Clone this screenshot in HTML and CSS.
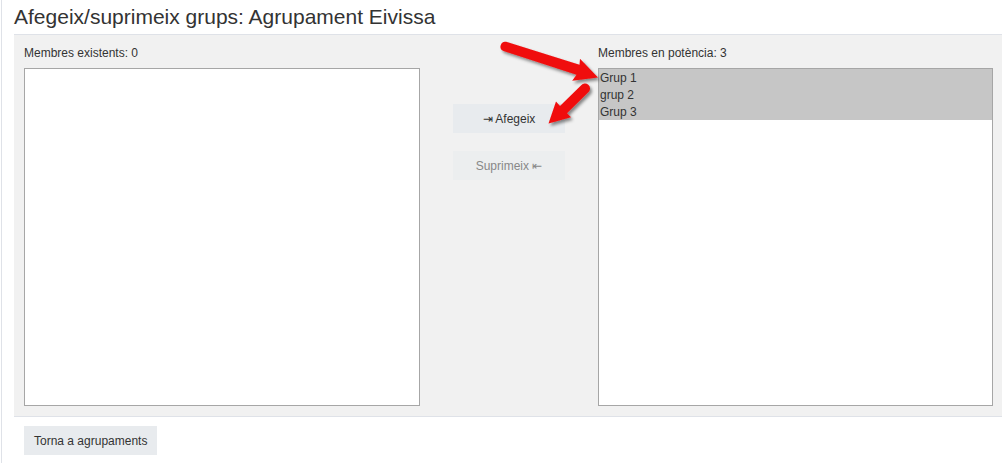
FILE: index.html
```html
<!DOCTYPE html>
<html lang="ca">
<head>
<meta charset="utf-8">
<title>Afegeix/suprimeix grups</title>
<link rel="stylesheet" href="styles.css">
</head>
<body>
<div class="page">
  <h2 class="title">Afegeix/suprimeix grups: Agrupament Eivissa</h2>
  <div class="panel">
    <div class="col">
      <div class="label">Membres existents: 0</div>
      <div class="listbox"></div>
    </div>
    <div class="mid">
      <button class="btn">&#x21E5; Afegeix</button>
      <button class="btn disabled">Suprimeix &#x21E4;</button>
    </div>
    <div class="col">
      <div class="label">Membres en potència: 3</div>
      <div class="listbox">
        <div class="opt sel">Grup 1</div>
        <div class="opt sel">grup 2</div>
        <div class="opt sel">Grup 3</div>
      </div>
    </div>
  </div>
  <div class="footer">
    <button class="btn back">Torna a agrupaments</button>
  </div>
</div>
<svg class="overlay" width="1002" height="463" viewBox="0 0 1002 463">
  <defs>
    <filter id="sh" x="-20%" y="-20%" width="150%" height="150%">
      <feDropShadow dx="2" dy="2.5" stdDeviation="1.6" flood-color="#000" flood-opacity="0.45"/>
    </filter>
  </defs>
  <g filter="url(#sh)" fill="#f00c0c">
    <path d="M506.2 41.8 L579.5 64.8 L580.0 58.8 L598 77.5 L572.2 80.8 L576.5 74.8 L503.6 51.0 A4.8 4.8 0 0 1 506.2 41.8 Z"/>
    <path d="M588.8 91.8 L567.0 113.2 L571.0 117.2 L548.5 123.5 L556.0 101.5 L560.0 106.0 L581.2 85.2 A5 5 0 0 1 588.8 91.8 Z"/>
  </g>
</svg>
</body>
</html>
```
FILE: styles.css
```css
html, body {
  margin: 0;
  padding: 0;
  background: #fff;
}
body {
  position: relative;
  width: 1002px;
  height: 463px;
  overflow: hidden;
  font-family: "Liberation Sans", Arial, sans-serif;
  color: #333;
}
.page {
  margin-left: 1px;
  border-left: 1px solid #dfe2e8;
  padding-left: 12px;
  height: 463px;
  box-sizing: border-box;
}
.title {
  margin: 0;
  padding-top: 5px;
  height: 29px;
  box-sizing: border-box;
  font-family: "Liberation Sans", Arial, sans-serif;
  font-weight: normal;
  font-size: 21px;
  line-height: 24px;
  color: #333;
}
.panel {
  margin-top: 5px;
  border-top: 1px solid #dfe2e8;
  border-bottom: 1px solid #dfe2e8;
  background: #f1f1f1;
  padding: 9px 0 10px 10px;
  display: grid;
  grid-template-columns: 396px 178px 395px;
  width: 999px;
}
.col {
  display: flex;
  flex-direction: column;
}
.label {
  font-size: 12px;
  line-height: 18px;
  height: 18px;
  margin-bottom: 6px;
  color: #333;
}
.listbox {
  height: 338px;
  box-sizing: border-box;
  border: 1px solid #a6a6a6;
  background: #fff;
}
.opt {
  font-size: 12px;
  line-height: 18px;
  height: 17px;
  padding-left: 1px;
  color: #333;
}
.opt.sel {
  background: #c6c6c6;
}
.mid {
  display: flex;
  flex-direction: column;
  align-items: center;
  gap: 18px;
  padding-top: 60px;
}
.btn {
  font-family: "Liberation Sans", Arial, sans-serif;
  font-size: 12px;
  color: #333;
  background: #e8ebee;
  border: none;
  border-radius: 0;
  height: 29px;
  padding: 0 10px;
  margin: 0;
}
.mid .btn {
  width: 112px;
}
.btn.disabled {
  color: #888;
  background: #eceeef;
}
.footer {
  padding: 9px 0 0 10px;
}
.overlay {
  position: absolute;
  top: 0;
  left: 0;
  pointer-events: none;
}
```
